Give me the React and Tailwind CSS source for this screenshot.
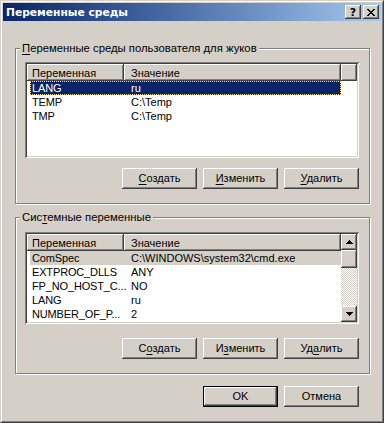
const raised =
  "shadow-[inset_-1px_-1px_#404040,inset_1px_1px_#fff,inset_-2px_-2px_#808080,inset_2px_2px_#d4d0c8]";
const raisedInner =
  "shadow-[inset_-1px_-1px_#404040,inset_1px_1px_#fff,inset_-2px_-2px_#808080]";
const sunken =
  "shadow-[inset_1px_1px_#808080,inset_-1px_-1px_#fff,inset_2px_2px_#404040,inset_-2px_-2px_#d4d0c8]";
const header =
  "shadow-[inset_-1px_-1px_#404040,inset_1px_1px_#fff,inset_-2px_-2px_#808080]";

function TitleBtn({ children }) {
  return (
    <div className={`w-[16px] h-[14px] bg-[#d4d0c8] ${raised} flex items-center justify-center`}>
      {children}
    </div>
  );
}

function Btn({ children, def }) {
  return (
    <div
      className={`w-[75px] h-[21px] flex items-center justify-center bg-[#d4d0c8] ${
        def ? "border border-black " + raisedInner : raised
      }`}
    >
      <span className="leading-[13px]">{children}</span>
    </div>
  );
}

function U({ children }) {
  return <span className="underline underline-offset-[2px]">{children}</span>;
}

function Group({ legend, className, children }) {
  return (
    <fieldset
      className={`border border-[#808080] shadow-[1px_1px_0_#fff,inset_1px_1px_0_#fff] p-0 m-0 min-w-0 ${className}`}
    >
      <legend className="ml-[4px] px-[2px] bg-[#d4d0c8] leading-[13px] h-[13px] text-[11.3px]">{legend}</legend>
      {children}
    </fieldset>
  );
}

function Row({ name, value, state }) {
  const sel =
    state === "focus"
      ? "bg-[#0a246a] text-white outline outline-1 outline-dotted outline-[#f5db95] -outline-offset-1"
      : state === "gray"
      ? "bg-[#d4d0c8]"
      : "";
  return (
    <div className={`flex h-[14px] shrink-0 ml-[3px] w-[311px] items-center ${sel}`}>
      <div className="w-[94px] shrink-0 pl-[2px] whitespace-nowrap tracking-[-0.15px]">{name}</div>
      <div className="pl-[7px] whitespace-nowrap">{value}</div>
    </div>
  );
}

function Arrow({ down }) {
  return (
    <svg width="7" height="4" viewBox="0 0 7 4" shapeRendering="crispEdges">
      {down ? (
        <path d="M0 0h7v1H0zM1 1h5v1H1zM2 2h3v1H2zM3 3h1v1H3z" fill="#000" />
      ) : (
        <path d="M3 0h1v1H3zM2 1h3v1H2zM1 2h5v1H1zM0 3h7v1H0z" fill="#000" />
      )}
    </svg>
  );
}

function Scrollbar() {
  return (
    <div className="w-[16px] flex flex-col shrink-0">
      <div className={`h-[16px] bg-[#d4d0c8] ${raised} flex items-center justify-center`}>
        <Arrow />
      </div>
      <div className={`h-[18px] bg-[#d4d0c8] ${raised}`} />
      <div className="flex-1 bg-[repeating-conic-gradient(#d4d0c8_0_25%,#ffffff_0_50%)] bg-[length:2px_2px]" />
      <div className={`h-[16px] bg-[#d4d0c8] ${raised} flex items-center justify-center`}>
        <Arrow down />
      </div>
    </div>
  );
}

function ListView({ height, rows, scroll }) {
  return (
    <div className={`bg-white p-[2px] ${sunken} ${height}`}>
      <div className="flex h-full overflow-hidden">
        <div className="flex-1 flex flex-col min-w-0 overflow-hidden">
          <div className="flex h-[17px] shrink-0 bg-[#d4d0c8]">
            <div className={`w-[97px] shrink-0 ${header} pl-[5px] pt-[1px] flex items-center`}>Переменная</div>
            <div className={`w-[217px] shrink-0 ${header} pl-[7px] pt-[1px] flex items-center`}>Значение</div>
            <div className={`flex-1 ${header}`} />
          </div>
          {rows.map((r, i) => (
            <Row key={i} name={r[0]} value={r[1]} state={r[2]} />
          ))}
        </div>
        {scroll && <Scrollbar />}
      </div>
    </div>
  );
}

export default function App() {
  return (
    <div className="w-[384px] h-[423px] bg-[#d4d0c8] border border-t-[#d4d0c8] border-l-[#d4d0c8] border-r-[#404040] border-b-[#404040] font-['Liberation_Sans',Arial,sans-serif] text-[11px] leading-[13px] text-black select-none">
      <div className="h-full border border-t-white border-l-white border-r-[#808080] border-b-[#808080] p-[1px] flex flex-col">
        <div className="h-[18px] shrink-0 flex items-center gap-[2px] bg-linear-to-r from-[#0a246a] to-[#a6caf0] pl-[3px] pr-[2px]">
          <span className="flex-1 text-white font-bold text-[10.7px] font-['DejaVu_Sans',sans-serif]">Переменные среды</span>
          <TitleBtn>
            <span className="font-bold text-[11px] leading-[11px] font-['DejaVu_Sans',sans-serif]">?</span>
          </TitleBtn>
          <TitleBtn>
            <svg width="8" height="7" viewBox="0 0 8 7" shapeRendering="crispEdges">
              <path
                d="M0 0h2v1H0zM6 0h2v1H6zM1 1h2v1H1zM5 1h2v1H5zM2 2h4v1H2zM3 3h2v1H3zM2 4h4v1H2zM1 5h2v1H1zM5 5h2v1H5zM0 6h2v1H0zM6 6h2v1H6z"
                fill="#000"
              />
            </svg>
          </TitleBtn>
        </div>
        <div className="flex-1 pl-[12px] pr-[11px] flex flex-col">
          <Group
            className="mt-[21px]"
            legend={
              <>
                <U>П</U>еременные среды пользователя для жуков
              </>
            }
          >
            <div className="pl-[9px] pr-[10px] pt-[7px] pb-[14px] flex flex-col">
              <ListView
                height="h-[96px]"
                rows={[
                  ["LANG", "ru", "focus"],
                  ["TEMP", "C:\\Temp"],
                  ["TMP", "C:\\Temp"],
                ]}
              />
              <div className="mt-[10px] flex justify-end gap-[6px]">
                <Btn>
                  <U>С</U>оздать
                </Btn>
                <Btn>
                  <U>И</U>зменить
                </Btn>
                <Btn>
                  <U>У</U>далить
                </Btn>
              </div>
            </div>
          </Group>
          <Group
            className="mt-[7px]"
            legend={
              <>
                Сис<U>т</U>емные переменные
              </>
            }
          >
            <div className="pl-[9px] pr-[10px] pt-[8px] pb-[14px] flex flex-col">
              <ListView
                height="h-[92px]"
                scroll
                rows={[
                  ["ComSpec", "C:\\WINDOWS\\system32\\cmd.exe", "gray"],
                  ["EXTPROC_DLLS", "ANY"],
                  ["FP_NO_HOST_C...", "NO"],
                  ["LANG", "ru"],
                  ["NUMBER_OF_P...", "2"],
                ]}
              />
              <div className="mt-[14px] flex justify-end gap-[6px]">
                <Btn>
                  С<U>о</U>здать
                </Btn>
                <Btn>
                  И<U>з</U>менить
                </Btn>
                <Btn>
                  Уд<U>а</U>лить
                </Btn>
              </div>
            </div>
          </Group>
          <div className="mt-[12px] flex justify-end gap-[6px] pr-[11px]">
            <Btn def>OK</Btn>
            <Btn>Отмена</Btn>
          </div>
        </div>
      </div>
    </div>
  );
}
